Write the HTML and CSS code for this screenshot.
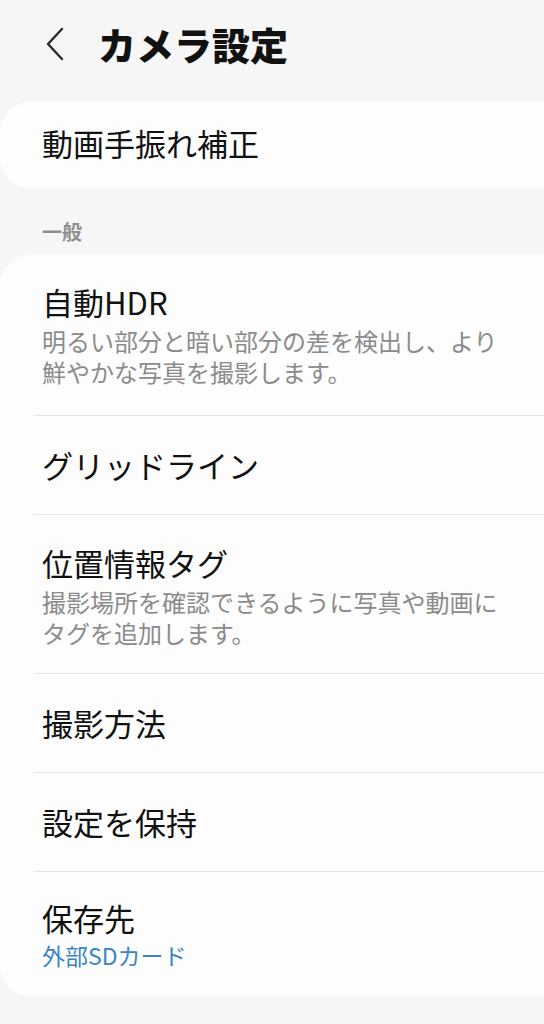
FILE: index.html
```html
<!DOCTYPE html>
<html lang="ja">
<head>
  <meta charset="UTF-8" />
  <meta name="viewport" content="width=device-width, initial-scale=1.0"/>
  <title>カメラ設定</title>
  <link rel="stylesheet" href="styles.css">
</head>
<body>
  <header class="top-bar">
    <svg class="back" width="18" height="34" viewBox="0 0 18 34">
      <path d="M16 2 L2 17 L16 32" fill="none" stroke="#2a2a2a" stroke-width="2.4" stroke-linecap="round" stroke-linejoin="round"/>
    </svg>
    <h1>カメラ設定</h1>
  </header>

  <div class="card single">
    <div class="row first">
      <div class="row-title">動画手振れ補正</div>
    </div>
  </div>

  <div class="section-label">一般</div>

  <div class="card">
    <div class="row first with-sub">
      <div class="row-title">自動HDR</div>
      <div class="row-sub">明るい部分と暗い部分の差を検出し、より</div>
      <div class="row-sub">鮮やかな写真を撮影します。</div>
    </div>
    <div class="row">
      <div class="row-title">グリッドライン</div>
    </div>
    <div class="row with-sub">
      <div class="row-title">位置情報タグ</div>
      <div class="row-sub">撮影場所を確認できるように写真や動画に</div>
      <div class="row-sub">タグを追加します。</div>
    </div>
    <div class="row">
      <div class="row-title">撮影方法</div>
    </div>
    <div class="row">
      <div class="row-title">設定を保持</div>
    </div>
    <div class="row last">
      <div class="row-title">保存先</div>
      <div class="row-value">外部SDカード</div>
    </div>
  </div>
</body>
</html>
```

FILE: styles.css
```css
body {
  margin: 0;
  background: #f6f6f6;
  font-family: "Noto Sans CJK JP", "Noto Sans", sans-serif;
  color: #111;
  overflow-x: hidden;
}

.top-bar {
  display: flex;
  align-items: center;
  gap: 34px;
  padding: 18px 0 0 46px;
  height: 52px;
  margin-bottom: 32px;
}

.back {
  display: block;
}

h1 {
  margin: 0;
  font-size: 38px;
  line-height: 52px;
  font-weight: 800;
  color: #111;
}

.card {
  background: #fdfdfd;
  border-radius: 30px;
  margin-right: -40px;
}

.row {
  margin-left: 34px;
  padding: 29px 0 29px 8px;
  border-top: 1px solid #e6e6e6;
}

.row.first {
  border-top: none;
  padding-top: 27px;
}

.card.single .row {
  padding: 21px 0 25px 8px;
}

.row-title {
  font-size: 31px;
  line-height: 40px;
}

.row-sub {
  font-size: 24px;
  line-height: 31px;
  color: #8b8b8b;
}

.row-title + .row-sub {
  margin-top: 3px;
}

.row.with-sub {
  padding-top: 28px;
  padding-bottom: 25px;
}

.row.first.with-sub {
  padding-top: 27px;
  padding-bottom: 28px;
}

.row-value {
  margin-top: 2px;
  font-size: 23px;
  line-height: 30px;
  color: #3a85c6;
}

.row.last {
  padding-top: 26px;
  padding-bottom: 26px;
}

.section-label {
  margin: 30px 0 9px 42px;
  font-size: 20px;
  line-height: 28px;
  font-weight: 700;
  color: #8e8e8e;
}
```
